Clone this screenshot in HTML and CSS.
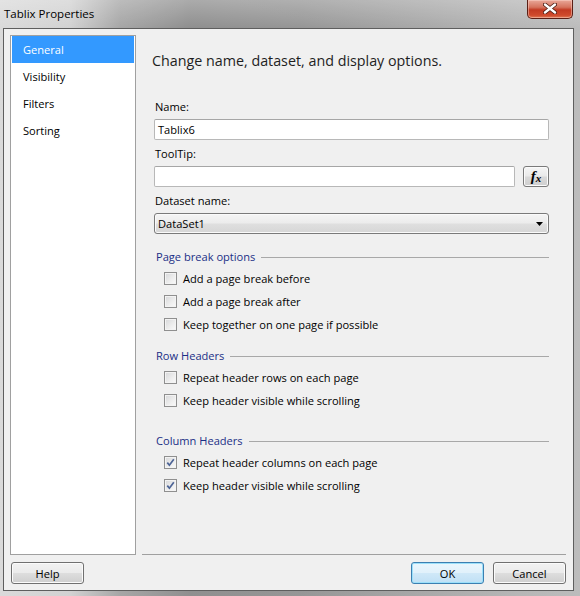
FILE: index.html
```html
<!DOCTYPE html>
<html lang="en">
<head>
<meta charset="utf-8">
<title>Tablix Properties</title>
<link rel="stylesheet" href="styles.css">
</head>
<body>
<div class="window">
  <div class="titlebar">
    <span class="title">Tablix Properties</span>
    <button class="close" aria-label="Close">
      <svg width="14" height="11" viewBox="0 0 14 11"><path d="M2 1.5 L12 9.5 M12 1.5 L2 9.5" stroke="#4a1a10" stroke-width="4" stroke-linecap="round"/><path d="M2 1.5 L12 9.5 M12 1.5 L2 9.5" stroke="#ffffff" stroke-width="2.4" stroke-linecap="round"/></svg>
    </button>
  </div>
  <div class="client">
    <div class="main">
      <ul class="nav">
        <li class="nav-item active">General</li>
        <li class="nav-item">Visibility</li>
        <li class="nav-item">Filters</li>
        <li class="nav-item">Sorting</li>
      </ul>
      <div class="panel">
        <h1 class="heading">Change name, dataset, and display options.</h1>

        <div class="field-label">Name:</div>
        <div class="textbox">Tablix6</div>

        <div class="field-label">ToolTip:</div>
        <div class="row-with-btn">
          <div class="textbox grow"></div>
          <button class="fx-btn"><span class="fx-f">f</span><span class="fx-x">x</span></button>
        </div>

        <div class="field-label">Dataset name:</div>
        <div class="select">
          <span>DataSet1</span>
          <svg class="arrow" width="7" height="4" viewBox="0 0 7 4"><path d="M0 0 H7 L3.5 4 Z" fill="#000"/></svg>
        </div>

        <div class="group first">
          <div class="group-head"><span>Page break options</span><span class="rule"></span></div>
          <div class="check"><span class="cb"></span>Add a page break before</div>
          <div class="check"><span class="cb"></span>Add a page break after</div>
          <div class="check"><span class="cb"></span>Keep together on one page if possible</div>
        </div>

        <div class="group second">
          <div class="group-head"><span>Row Headers</span><span class="rule"></span></div>
          <div class="check"><span class="cb"></span>Repeat header rows on each page</div>
          <div class="check"><span class="cb"></span>Keep header visible while scrolling</div>
        </div>

        <div class="group third">
          <div class="group-head"><span>Column Headers</span><span class="rule"></span></div>
          <div class="check"><span class="cb checked"><svg width="11" height="11" viewBox="0 0 11 11"><path d="M2.3 5.6 L4.4 8.2 L8.8 2.2" fill="none" stroke="#4d6496" stroke-width="1.7"/></svg></span>Repeat header columns on each page</div>
          <div class="check"><span class="cb checked"><svg width="11" height="11" viewBox="0 0 11 11"><path d="M2.3 5.6 L4.4 8.2 L8.8 2.2" fill="none" stroke="#4d6496" stroke-width="1.7"/></svg></span>Keep header visible while scrolling</div>
        </div>
      </div>
    </div>
    <div class="footer">
      <button class="btn">Help</button>
      <span class="spacer"></span>
      <button class="btn default">OK</button>
      <button class="btn">Cancel</button>
    </div>
  </div>
</div>
</body>
</html>
```

FILE: styles.css
```css
html, body {
  margin: 0;
  padding: 0;
}
body {
  width: 580px;
  height: 596px;
  overflow: hidden;
  font-family: "Open Sans", "Noto Sans", sans-serif;
  font-size: 11.1px;
  color: #000;
}
.window {
  width: 580px;
  height: 596px;
  box-sizing: border-box;
  display: flex;
  flex-direction: column;
  background:
    linear-gradient(180deg, rgba(255,255,255,0.25) 0, rgba(255,255,255,0) 28px),
    linear-gradient(90deg, #dadada 0, #d2d2d2 70px, #a6a6a6 120px, #8f8f8f 190px, #969696 300px, #a8a8a8 420px, #b6b6b6 520px, #bcbcbc 580px);
}
.titlebar {
  height: 28px;
  display: flex;
  align-items: flex-start;
}
.title {
  padding-left: 4px;
  line-height: 28px;
  font-size: 11.5px;
  color: #000;
  flex: 1;
}
.close {
  width: 46px;
  height: 19px;
  margin-right: 7px;
  padding: 0;
  border: 1px solid #5a1f15;
  border-top: none;
  border-radius: 0 0 5px 5px;
  background: linear-gradient(180deg, #e9a899 0, #d5735e 40%, #c23a22 55%, #cf4a2c 85%, #e07a55 100%);
  display: flex;
  align-items: center;
  justify-content: center;
  box-shadow: inset 0 0 0 1px rgba(255,220,210,0.45);
}
.close svg { display: block; margin-top: -1px; }

.client {
  margin: 0 6px 5px 3px;
  flex: 1;
  border: 1px solid #5e5e5e;
  background: #f0f0f0;
  display: flex;
  flex-direction: column;
  padding: 6px 7px 6px 6px;
}
.main {
  display: flex;
  gap: 6px;
  height: 520px;
}
.nav {
  list-style: none;
  margin: 0;
  padding: 0 1px;
  width: 126px;
  box-sizing: border-box;
  background: #fff;
  border: 1px solid #a0a0a0;
}
.nav-item {
  height: 27px;
  line-height: 27px;
  padding-left: 11px;
}
.nav-item.active {
  background: #3399ff;
  color: #fff;
}
.panel {
  flex: 1;
  border-bottom: 1px solid #a0a0a0;
  padding: 0 17px 0 12px;
  box-sizing: border-box;
  display: flex;
  flex-direction: column;
}
.heading {
  margin: 16px 0 0 -2px;
  font-size: 14.3px;
  font-weight: normal;
  line-height: 20px;
  height: 20px;
  color: #1e1e1e;
}
.field-label {
  height: 16px;
  line-height: 16px;
  margin-top: 6px;
  padding-left: 1px;
}
.heading + .field-label { margin-top: 28px; }
.textbox {
  height: 21px;
  box-sizing: border-box;
  margin-top: 4px;
  background: #fff;
  border: 1px solid #b8b8b8;
  border-top-color: #a6a6a6;
  border-radius: 2px;
  padding: 0 3px;
  line-height: 19px;
}
.row-with-btn {
  display: flex;
  gap: 8px;
  margin-top: 4px;
}
.row-with-btn .textbox { margin-top: 0; }
.grow { flex: 1; }
.fx-btn {
  width: 26px;
  height: 21px;
  padding: 0;
  box-sizing: border-box;
  border: 1px solid #7a7a7a;
  border-radius: 3px;
  background: linear-gradient(180deg, #f6f6f6 0, #e9e9e9 48%, #d9d9d9 52%, #cfcfcf 100%);
  font-family: "Liberation Serif", "DejaVu Serif", serif;
  font-weight: bold;
  font-style: italic;
  color: #000;
  display: flex;
  align-items: center;
  justify-content: center;
  box-shadow: inset 0 0 0 1px #fbfbfb;
}
.fx-f { font-size: 15px; line-height: 15px; }
.fx-x { font-size: 11px; line-height: 11px; margin-top: 4px; }
.select {
  height: 21px;
  box-sizing: border-box;
  margin-top: 4px;
  border: 1px solid #7a7a7a;
  border-radius: 3px;
  background: linear-gradient(180deg, #f4f4f4 0, #ececec 48%, #dfdfdf 52%, #d6d6d6 100%);
  display: flex;
  align-items: center;
  padding: 0 4px 0 3px;
  box-shadow: inset 0 0 0 1px #fafafa;
}
.select span { flex: 1; line-height: 19px; }
.arrow { display: block; margin-right: 1px; }

.group-head {
  height: 16px;
  line-height: 16px;
  display: flex;
  align-items: center;
  color: #1b2f86;
  padding-left: 2px;
  margin-bottom: 2px;
}
.rule {
  flex: 1;
  height: 1px;
  background: #a8a8a8;
  margin-left: 6px;
}
.group.first { margin-top: 15px; }
.group.second { margin-top: 12px; }
.group.third { margin-top: 21px; }
.check {
  height: 23px;
  display: flex;
  align-items: center;
  padding-left: 10px;
}
.cb {
  width: 13px;
  height: 13px;
  box-sizing: border-box;
  border: 1px solid #8f8f8f;
  background: linear-gradient(135deg, #d6d7d9 0, #eeeeee 60%, #fafafa 100%);
  box-shadow: inset 0 0 0 1px #f3f3f3;
  margin-right: 6px;
  display: flex;
  align-items: center;
  justify-content: center;
}
.cb svg { display: block; }

.footer {
  display: flex;
  gap: 9px;
  margin-top: 7px;
  padding-left: 1px;
}
.spacer { flex: 1; }
.btn {
  width: 73px;
  height: 22px;
  box-sizing: border-box;
  padding: 0;
  border: 1px solid #707070;
  border-radius: 3px;
  background: linear-gradient(180deg, #f2f2f2 0, #ebebeb 48%, #dddddd 52%, #cfcfcf 100%);
  box-shadow: inset 0 0 0 1px #fbfbfb;
  font-family: "Open Sans", "Noto Sans", sans-serif;
  font-size: 11.1px;
  color: #000;
}
.btn.default {
  border-color: #3c7fb1;
  box-shadow: inset 0 0 0 1px #9ce0fa;
  background: linear-gradient(180deg, #eaf6fd 0, #e1f1fb 48%, #cfe8f8 52%, #c0e0f5 100%);
}
```
